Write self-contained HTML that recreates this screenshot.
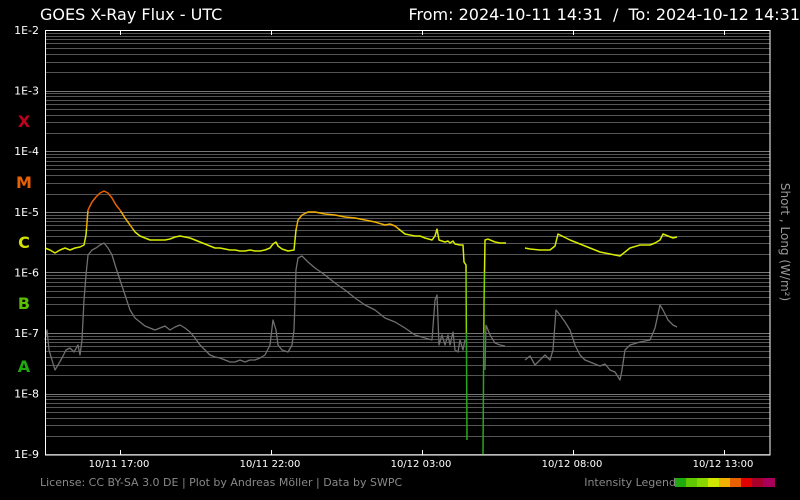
<!DOCTYPE html>
<html><head><meta charset="utf-8"><style>
body{margin:0;background:#000;width:800px;height:500px;overflow:hidden;font-family:"DejaVu Sans","Liberation Sans",sans-serif;}
</style></head><body>
<svg id="s" width="800" height="500" xmlns="http://www.w3.org/2000/svg" style="display:block">
<defs>
<linearGradient id="lg" gradientUnits="userSpaceOnUse" x1="0" y1="30" x2="0" y2="455">
<stop offset="0.4259" stop-color="#e86000"/><stop offset="0.4259" stop-color="#f0b000"/>
<stop offset="0.4682" stop-color="#f0b000"/><stop offset="0.4682" stop-color="#d8ec00"/>
<stop offset="0.5694" stop-color="#d8ec00"/><stop offset="0.5694" stop-color="#88d400"/>
<stop offset="0.7129" stop-color="#88d400"/><stop offset="0.7129" stop-color="#28a818"/>
<stop offset="1" stop-color="#28a818"/>
</linearGradient>
</defs>
<text x="40" y="20" fill="#fff" font-size="16">GOES X-Ray Flux - UTC</text>
<text x="800" y="20" fill="#fff" font-size="16" text-anchor="end">From: 2024-10-11 14:31 &#160;/&#160; To: 2024-10-12 14:31</text>
<g id="grid"></g>
<g font-size="11" fill="#fff" text-anchor="end" id="ylab"></g>
<g font-size="16" font-weight="bold" text-anchor="middle">
<text x="24" y="127" fill="#c00020">X</text>
<text x="24" y="188" fill="#e86000">M</text>
<text x="24" y="248" fill="#d0e000">C</text>
<text x="24" y="309" fill="#58c000">B</text>
<text x="24" y="372" fill="#20a810">A</text>
</g>
<polyline fill="none" stroke="#707070" stroke-width="1.3" stroke-linejoin="round" points="45,340 47,330 49,350 52,360 55,370 58,365 62,358 66,350 70,348 74,352 78,345 80,355 82,340 84,300 86,275 88,255 92,250 96,248 100,245 104,243 108,248 112,255 116,268 120,280 125,295 130,310 135,318 140,322 145,326 150,328 155,330 160,328 165,326 170,330 175,327 180,325 185,328 190,332 195,338 200,345 205,350 210,355 215,357 220,358 225,360 230,362 235,362 240,360 245,362 250,360 255,360 260,358 265,355 270,345 273,320 276,330 278,345 282,350 288,352 292,345 294,330 296,270 298,258 302,256 308,262 315,268 325,275 335,283 345,290 355,298 365,305 375,310 385,318 395,322 405,328 415,335 425,338 432,340 435,300 437,295 439,345 442,335 445,345 448,335 450,345 453,332 455,350 458,352 460,340 463,350 465,340"/>
<polyline fill="none" stroke="#707070" stroke-width="1.3" points="485,370 486,325 490,335 495,343 500,345 505,346"/>
<polyline fill="none" stroke="#707070" stroke-width="1.3" stroke-linejoin="round" points="525,360 530,356 535,365 540,360 545,355 550,360 553,350 556,310 560,315 565,322 570,330 575,345 580,355 585,360 590,362 595,364 600,366 605,364 610,370 615,372 620,380 622,370 625,350 630,345 640,342 650,340 655,328 660,305 663,310 668,320 673,325 677,327"/>
<polyline fill="none" stroke="url(#lg)" stroke-width="1.5" stroke-linejoin="round" points="45,248 50,250 55,253 60,250 65,248 70,250 75,248 80,247 84,245 86,235 88,210 92,202 96,197 100,193 104,191 108,193 112,198 116,205 120,210 125,218 130,225 135,232 140,236 145,238 150,240 155,240 160,240 165,240 170,239 175,237 180,236 185,237 190,238 195,240 200,242 205,244 210,246 215,248 220,248 225,249 230,250 235,250 240,251 245,251 250,250 255,251 260,251 265,250 270,248 273,244 276,242 278,246 282,249 288,251 294,250 296,230 298,220 302,215 308,212 315,212 325,214 335,215 345,217 355,218 365,220 375,222 385,225 390,224 395,226 400,230 405,234 410,235 415,236 420,236 425,238 432,240 435,236 437,229 439,240 445,242 448,241 450,243 453,241 455,244 460,245 463,245 464,262 466,265 467,440"/>
<polyline fill="none" stroke="url(#lg)" stroke-width="1.5" points="483,455 484,305 485,240 488,239 495,242 500,243 506,243"/>
<polyline fill="none" stroke="url(#lg)" stroke-width="1.5" stroke-linejoin="round" points="525,248 530,249 540,250 550,250 555,246 558,234 562,236 570,240 580,244 590,248 600,252 610,254 620,256 625,252 630,248 640,245 650,245 655,243 660,240 663,234 668,236 673,238 677,237"/>
<rect x="45.5" y="30.5" width="724.5" height="424.5" fill="none" stroke="#fff" stroke-width="1"/>
<g stroke="#fff"><line x1="120.5" y1="31" x2="120.5" y2="35"/><line x1="120.5" y1="455" x2="120.5" y2="450"/><line x1="271.5" y1="31" x2="271.5" y2="35"/><line x1="271.5" y1="455" x2="271.5" y2="450"/><line x1="422.5" y1="31" x2="422.5" y2="35"/><line x1="422.5" y1="455" x2="422.5" y2="450"/><line x1="573.5" y1="31" x2="573.5" y2="35"/><line x1="573.5" y1="455" x2="573.5" y2="450"/><line x1="724.5" y1="31" x2="724.5" y2="35"/><line x1="724.5" y1="455" x2="724.5" y2="450"/></g>
<g font-size="10" fill="#fff" text-anchor="middle">
<text x="119" y="467">10/11 17:00</text><text x="270" y="467">10/11 22:00</text><text x="421" y="467">10/12 03:00</text><text x="572" y="467">10/12 08:00</text><text x="723" y="467">10/12 13:00</text>
</g>
<text x="40" y="486" font-size="11" fill="#888">License: CC BY-SA 3.0 DE | Plot by Andreas Möller | Data by SWPC</text>
<text x="676" y="486" font-size="11" fill="#888" text-anchor="end">Intensity Legend</text>
<g>
<rect x="675" y="478" width="11" height="9" fill="#20a810"/><rect x="686" y="478" width="11" height="9" fill="#60c800"/><rect x="697" y="478" width="11" height="9" fill="#88d800"/><rect x="708" y="478" width="11" height="9" fill="#d0e800"/><rect x="719" y="478" width="11" height="9" fill="#f0b000"/><rect x="730" y="478" width="11" height="9" fill="#e86000"/><rect x="741" y="478" width="11" height="9" fill="#e00000"/><rect x="752" y="478" width="11" height="9" fill="#a8002a"/><rect x="763" y="478" width="12" height="9" fill="#a8005a"/>
</g>
<text transform="translate(781,242) rotate(90)" font-size="12" fill="#999" text-anchor="middle">Short , Long (W/m²)</text>
</svg>
<script>
var g=document.getElementById('grid'),yl=document.getElementById('ylab'),h='';
var dec=60.6;
for(var d=0;d<7;d++){var y0=30+d*dec;
 for(var m=1;m<10;m++){var y=Math.round(y0+dec*(1-Math.log10(m)))+0.5; if(m==1)y=Math.round(y0+dec)+0.5;
  if(y>455)continue;
  h+='<line x1="46" x2="770" y1="'+y+'" y2="'+y+'" stroke="'+(m==1?'#777':'#555')+'" stroke-width="1"/>';}
}
g.innerHTML=h;
var s='';for(var e=2;e<=9;e++){s+='<text x="39" y="'+(34+(e-2)*dec)+'">1E-'+e+'</text>';}
yl.innerHTML=s;
</script>
</body></html>
